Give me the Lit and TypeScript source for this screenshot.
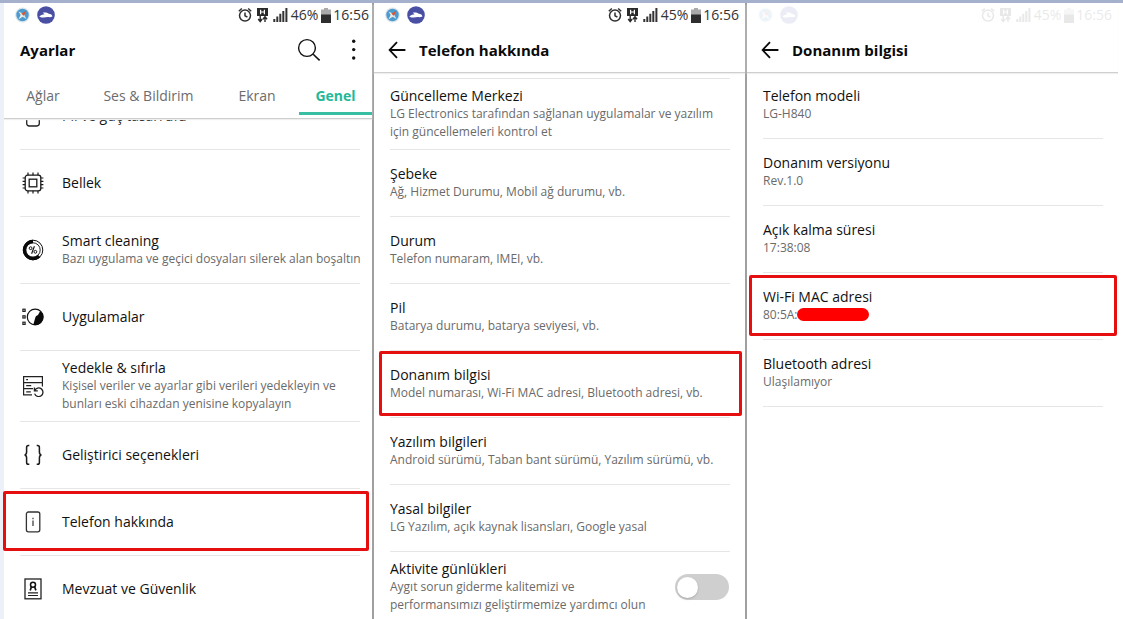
import { LitElement, html, css, svg, nothing, TemplateResult } from "lit";
import { customElement, property } from "lit/decorators.js";
import { classMap } from "lit/directives/class-map.js";

interface Row {
  title: string;
  detail?: string;
  icon?: TemplateResult;
  marked?: boolean;
}

const icon = (body: unknown) =>
  html`<svg class="icon" viewBox="0 0 22 22" width="22" height="22" aria-hidden="true">${body}</svg>`;

const batteryIcon = icon(svg`
  <rect x="4.7" y="1" width="12.6" height="20" rx="2.4" fill="none" stroke="#222" stroke-width="1.3"/>`);

const chipIcon = icon(svg`
  <rect x="3.2" y="3.2" width="15.6" height="15.6" rx="2.4" fill="none" stroke="#1a1a1a" stroke-width="1.3"/>
  <rect x="7.2" y="7.2" width="7.6" height="7.6" fill="none" stroke="#1a1a1a" stroke-width="1.3"/>
  <path d="M6 .6v2.6M11 .6v2.6M16 .6v2.6M6 18.8v2.6M11 18.8v2.6M16 18.8v2.6M.6 6h2.6M.6 9.4h2.6M.6 12.7h2.6M.6 16h2.6M18.8 6h2.6M18.8 9.4h2.6M18.8 12.7h2.6M18.8 16h2.6" stroke="#1a1a1a" stroke-width="1.2"/>`);

const cleanIcon = icon(svg`
  <circle cx="11" cy="11" r="9.8" fill="#fff" stroke="#111" stroke-width="1"/>
  <path d="M11 .8A10.2 10.2 0 1 0 18.4 18.2L15.8 15.7A6.8 6.8 0 1 1 11 4.2Z" fill="#0a0a0a"/>
  <circle cx="11" cy="11" r="7.2" fill="none" stroke="#111" stroke-width=".9"/>
  <circle cx="8.6" cy="9.2" r="1.4" fill="none" stroke="#111" stroke-width="1"/>
  <circle cx="13.4" cy="12.8" r="1.4" fill="none" stroke="#111" stroke-width="1"/>
  <path d="M12.4 7.2 9.6 14.8" stroke="#111" stroke-width="1.1"/>`);

const appsIcon = icon(svg`
  <circle cx="13.2" cy="11" r="7.9" fill="none" stroke="#111" stroke-width="1.2"/>
  <path d="M18.2 4.9A7.9 7.9 0 0 1 11.3 18.7L13.2 12C13.6 10.2 14.8 9.7 16 9Z" fill="#0a0a0a"/>
  <g fill="none" stroke="#222" stroke-width="1.2"><rect x=".9" y="3.2" width="2.2" height="2.2"/><rect x=".9" y="9.8" width="2.2" height="2.2"/><rect x=".9" y="16.2" width="2.2" height="2.2"/></g>`);

const backupIcon = icon(svg`
  <g fill="none" stroke="#222" stroke-width="1.2"><path d="M10 19.8H1.6V1.6H20.4V11.5M1.6 7.6H20.4M1.6 13.6H11"/>
  <path d="M4.2 4.6h1.8M4.2 10.6h5M4.2 16.8h4.6"/>
  <path d="M12.4 12.6v3.2h3.4M12.7 15.6A4.3 4.3 0 1 1 12.6 18.6" stroke-width="1.3"/></g>`);

const bracesIcon = icon(svg`
  <path d="M7.3 1.5H6.4Q4.6 1.5 4.6 3.4V8Q4.6 10.6 2.6 10.9Q4.6 11.2 4.6 13.8V18.4Q4.6 20.3 6.4 20.3H7.3M14.7 1.5H15.6Q17.4 1.5 17.4 3.4V8Q17.4 10.6 19.4 10.9Q17.4 11.2 17.4 13.8V18.4Q17.4 20.3 15.6 20.3H14.7" fill="none" stroke="#1a1a1a" stroke-width="1.5"/>`);

const aboutIcon = icon(svg`
  <rect x="4.4" y="1" width="13.4" height="19.8" rx="2" fill="none" stroke="#333" stroke-width="1.3"/>
  <path d="M11 6.8v1.5M11 9.4v5.6" stroke="#333" stroke-width="1.2"/>`);

const certificateIcon = icon(svg`
  <rect x="3" y="1" width="16" height="19.8" fill="none" stroke="#222" stroke-width="1.3"/>
  <circle cx="11" cy="6.8" r="2.5" fill="none" stroke="#111" stroke-width="1.5"/>
  <path d="M9.4 8.8 8.2 12.4M12.6 8.8l1.3 3.6" stroke="#111" stroke-width="1.7"/>
  <path d="M6 14.8h10M6 17.5h10" stroke="#222" stroke-width="1.2"/>`);

const generalRows: Row[] = [
  { title: "Pil ve güç tasarrufu", icon: batteryIcon },
  { title: "Bellek", icon: chipIcon },
  {
    title: "Smart cleaning",
    detail: "Bazı uygulama ve geçici dosyaları silerek alan boşaltın",
    icon: cleanIcon,
  },
  { title: "Uygulamalar", icon: appsIcon },
  {
    title: "Yedekle & sıfırla",
    detail: "Kişisel veriler ve ayarlar gibi verileri yedekleyin ve\nbunları eski cihazdan yenisine kopyalayın",
    icon: backupIcon,
  },
  { title: "Geliştirici seçenekleri", icon: bracesIcon },
  { title: "Telefon hakkında", icon: aboutIcon, marked: true },
  { title: "Mevzuat ve Güvenlik", icon: certificateIcon },
];

const aboutRows: Row[] = [
  {
    title: "Güncelleme Merkezi",
    detail: "LG Electronics tarafından sağlanan uygulamalar ve yazılım\niçin güncellemeleri kontrol et",
  },
  { title: "Şebeke", detail: "Ağ, Hizmet Durumu, Mobil ağ durumu, vb." },
  { title: "Durum", detail: "Telefon numaram, IMEI, vb." },
  { title: "Pil", detail: "Batarya durumu, batarya seviyesi, vb." },
  {
    title: "Donanım bilgisi",
    detail: "Model numarası, Wi-Fi MAC adresi, Bluetooth adresi, vb.",
    marked: true,
  },
  { title: "Yazılım bilgileri", detail: "Android sürümü, Taban bant sürümü, Yazılım sürümü, vb." },
  { title: "Yasal bilgiler", detail: "LG Yazılım, açık kaynak lisansları, Google yasal" },
];

const hardwareRows: Row[] = [
  { title: "Telefon modeli", detail: "LG-H840" },
  { title: "Donanım versiyonu", detail: "Rev.1.0" },
  { title: "Açık kalma süresi", detail: "17:38:08" },
  { title: "Wi-Fi MAC adresi", detail: "80:5A:", marked: true },
  { title: "Bluetooth adresi", detail: "Ulaşılamıyor" },
];

@customElement("status-bar")
class StatusBar extends LitElement {
  @property() charge = "";

  static styles = css`
    :host {
      display: flex;
      align-items: center;
      height: 24px;
      padding: 0 3px 0 10px;
      color: #333;
      font: 14px/24px "Open Sans", sans-serif;
    }
    svg {
      display: block;
      flex: none;
    }
    .apps {
      display: flex;
      gap: 5px;
      flex: 1;
    }
    .signals {
      display: flex;
      align-items: center;
      gap: 4px;
      margin-right: 3px;
    }
    .battery {
      margin: 0 2px 0 3px;
    }
  `;

  render() {
    return html`
      <span class="apps">
        <svg width="18" height="18" viewBox="0 0 18 18">
          <circle cx="8.5" cy="9" r="7.4" fill="#dbe4e9" />
          <circle cx="8.5" cy="9" r="6.2" fill="#4b9bd0" />
          <path d="M4.4 5.6 9.5 7.8 7.4 10.1Z" fill="#e9e4da" />
          <path d="M12.4 13 9.8 7.8 7.3 10.1Z" fill="#dde3e6" />
          <path d="M12.6 4.6 9.8 10.1 7.2 7.8Z" fill="#d8572f" />
          <path d="M4.4 13.4 9.8 10.1 7.2 7.8Z" fill="#e6ebe9" />
        </svg>
        <svg width="18" height="18" viewBox="0 0 18 18">
          <circle cx="9" cy="9" r="8.8" fill="#4950a4" />
          <path d="M2.2 10.4C4.2 8.7 6 8.6 7.6 8.2L5.8 6.7C8 6.2 10.2 6.5 11.8 7.8 13.8 8 15.2 9 15.4 10.5 13.8 11.4 12.2 11.2 10.8 11.1 8 11.6 5 12.2 2.2 10.4Z" fill="#fff" />
        </svg>
      </span>
      <span class="signals">
        <svg width="14" height="16" viewBox="0 0 14 16">
          <circle cx="7" cy="8.6" r="5.5" fill="none" stroke="#2e2e2e" stroke-width="1.5" />
          <path d="M7 5.4v3.4l2.4 1.2M.8 4.2 3.8 1.5M13.2 4.2 10.2 1.5" fill="none" stroke="#2e2e2e" stroke-width="1.5" />
        </svg>
        <svg width="13" height="16" viewBox="0 0 13 16">
          <rect x="1" y="1" width="11" height="8" fill="#2a2a2a" />
          <path d="M4.6 2.8v4.4M8.4 2.8v4.4M4.6 5h3.8" stroke="#fff" stroke-width="1.2" />
          <path d="M4.2 9v5.4M2.2 12l2 2.6 2-2.6M9 15V10M7 12.2l2-2.6 2 2.6" fill="none" stroke="#2a2a2a" stroke-width="1.4" />
        </svg>
        <svg width="15" height="16" viewBox="0 0 15 16">
          <path d="M1.3 15v-3M4.3 15V9.6M7.3 15V6.8M10.3 15V4M13.4 15V1" stroke="#333" stroke-width="2" />
        </svg>
      </span>
      <span>${this.charge}</span>
      <svg class="battery" width="10" height="15" viewBox="0 0 10 15">
        <path d="M3 0h4v1.5h3V7H0V1.5h3Z" fill="#aaa" />
        <rect y="6.5" width="10" height="8.5" fill="#2e2e2e" />
      </svg>
      <time>16:56</time>
    `;
  }
}

@customElement("app-root")
class AppRoot extends LitElement {
  static styles = css`
    * {
      box-sizing: border-box;
    }
    :host {
      display: grid;
      box-sizing: border-box;
      grid-template-columns: 370fr 373fr 371fr;
      height: 100vh;
      padding: 0 5px 0 4px;
      overflow: hidden;
      border-top: 3px solid #a5b1cc;
      background: linear-gradient(90deg, #ecf1f9 4px, #fff 4px);
      color: #111;
      font: 14px/18px "Open Sans", sans-serif;
    }
    .screen {
      min-width: 0;
      min-height: 0;
      background: #fff;
      border-right: 2px solid #a0a0a0;
    }
    .screen:last-child {
      border-right: 0;
    }
    .about status-bar,
    .hardware status-bar {
      padding-right: 6px;
    }
    .faded {
      opacity: 0.1;
    }
    .top {
      position: relative;
      z-index: 1;
      background: #fff;
      box-shadow: 0 1px 0 #cfcfcf, 0 2px 1px #efefef;
    }
    .bar {
      display: flex;
      align-items: center;
      height: 45px;
      padding: 0 10px 0 16px;
    }
    h2 {
      flex: 1;
      margin: 0;
      font-size: 15px;
      line-height: 24px;
      font-weight: 700;
      color: #0a0a0a;
    }
    button {
      padding: 0;
      border: 0;
      background: none;
      font: inherit;
      color: inherit;
    }
    .tool svg,
    .icon {
      display: block;
    }
    .search {
      margin-right: 25px;
    }
    .back {
      margin: 0 13px 0 -2px;
    }
    .tabs {
      display: grid;
      grid-template-columns: 78fr 133fr 84fr 73fr;
      height: 46px;
    }
    .tab {
      padding-top: 8px;
      border-bottom: 3px solid transparent;
      margin-bottom: 3px;
      color: #6c6c6c;
    }
    .tab.current {
      color: #25b898;
      border-color: #38bfa3;
      font-weight: 700;
    }
    .list {
      margin: 0;
      padding: 0 15px 0 16px;
    }
    .general .list {
      margin-top: -35px;
      padding-right: 12px;
    }
    .lead {
      height: 7px;
      margin: 0 15px 0 16px;
      border-bottom: 1px solid #e4e4e4;
    }
    .row {
      position: relative;
      display: flex;
      align-items: center;
      min-height: 67px;
      padding: 8px 0;
      border-bottom: 1px solid #e6e6e6;
      color: inherit;
      text-decoration: none;
    }
    .icon {
      flex: none;
      margin: 0 18px 0 2px;
    }
    .words {
      flex: 1;
      min-width: 0;
    }
    .name,
    .detail {
      display: block;
      margin: 0;
      white-space: pre;
    }
    .detail {
      font-size: 12px;
      color: #6a6a6a;
    }
    .marked::after {
      content: "";
      position: absolute;
      inset: 2px -9px 4px -17px;
      border: 3px solid #e60f0f;
      border-radius: 2px;
      pointer-events: none;
    }
    .about .marked::after {
      inset: 0 -12px 1px -11px;
    }
    .hardware .marked::after {
      inset: 2px -14px 3px -14px;
    }
    .redacted {
      display: inline-block;
      width: 72px;
      height: 13px;
      border-radius: 7px;
      background: #fe0000;
      vertical-align: -2px;
    }
    .switch {
      appearance: none;
      display: flex;
      align-items: center;
      width: 54px;
      height: 26px;
      margin: 0 1px 0 0;
      padding: 0 2px;
      border-radius: 13px;
      background: #cfcfcf;
    }
    .switch::before {
      content: "";
      width: 21px;
      height: 21px;
      border-radius: 50%;
      background: #fff;
      box-shadow: 0 1px 2px #8888;
    }
    .switch:checked {
      justify-content: flex-end;
      background: #38bfa3;
    }
  `;

  private words(row: Row) {
    return html`<span class="words">
      <span class="name">${row.title}</span>
      ${row.detail ? html`<span class="detail">${row.detail}</span>` : nothing}
    </span>`;
  }

  private link(row: Row) {
    return html`<a href="#" class=${classMap({ row: true, marked: !!row.marked })}>
      ${row.icon ?? nothing}${this.words(row)}
    </a>`;
  }

  private backBar(title: string) {
    return html`<div class="bar">
      <button class="tool back" aria-label="Geri">
        <svg width="18" height="18" viewBox="0 0 18 18">
          <path d="M9 1.2 1.6 9 9 16.8M1.8 9H17.4" fill="none" stroke="#0a0a0a" stroke-width="1.8" />
        </svg>
      </button>
      <h2>${title}</h2>
    </div>`;
  }

  render() {
    return html`
      <section class="screen general">
        <header class="top">
          <status-bar charge="46%"></status-bar>
          <div class="bar">
            <h2>Ayarlar</h2>
            <button class="tool search" aria-label="Ara">
              <svg width="24" height="24" viewBox="0 0 24 24">
                <path d="M16.2 16.2 22.6 22.4" stroke="#111" stroke-width="1.6" />
                <circle cx="10" cy="10" r="8.4" fill="none" stroke="#111" stroke-width="1.4" />
              </svg>
            </button>
            <button class="tool" aria-label="Menü">
              <svg width="16" height="24" viewBox="0 0 16 24">
                <g fill="#111">
                  <circle cx="7.7" cy="3.2" r="1.7" />
                  <circle cx="7.7" cy="11.6" r="1.7" />
                  <circle cx="7.7" cy="20" r="1.7" />
                </g>
              </svg>
            </button>
          </div>
          <nav class="tabs" role="tablist">
            <button class="tab" role="tab">Ağlar</button>
            <button class="tab" role="tab">Ses &amp; Bildirim</button>
            <button class="tab" role="tab">Ekran</button>
            <button class="tab current" role="tab" aria-selected="true">Genel</button>
          </nav>
        </header>
        <div class="list">${generalRows.map((row) => this.link(row))}</div>
      </section>

      <section class="screen about">
        <header class="top">
          <status-bar charge="45%"></status-bar>
          ${this.backBar("Telefon hakkında")}
        </header>
        <div class="lead"></div>
        <div class="list">
          ${aboutRows.map((row) => this.link(row))}
          <label class="row">
            ${this.words({
              title: "Aktivite günlükleri",
              detail: "Aygıt sorun giderme kalitemizi ve\nperformansımızı geliştirmemize yardımcı olun",
            })}
            <input class="switch" type="checkbox" role="switch" />
          </label>
        </div>
      </section>

      <section class="screen hardware">
        <header class="top">
          <status-bar class="faded" charge="45%"></status-bar>
          ${this.backBar("Donanım bilgisi")}
        </header>
        <dl class="list">
          ${hardwareRows.map(
            (row) => html`<div class=${classMap({ row: true, marked: !!row.marked })}>
              <div class="words">
                <dt class="name">${row.title}</dt>
                <dd class="detail">${row.detail}${row.marked ? html`<span class="redacted"></span>` : nothing}</dd>
              </div>
            </div>`,
          )}
        </dl>
      </section>
    `;
  }
}
